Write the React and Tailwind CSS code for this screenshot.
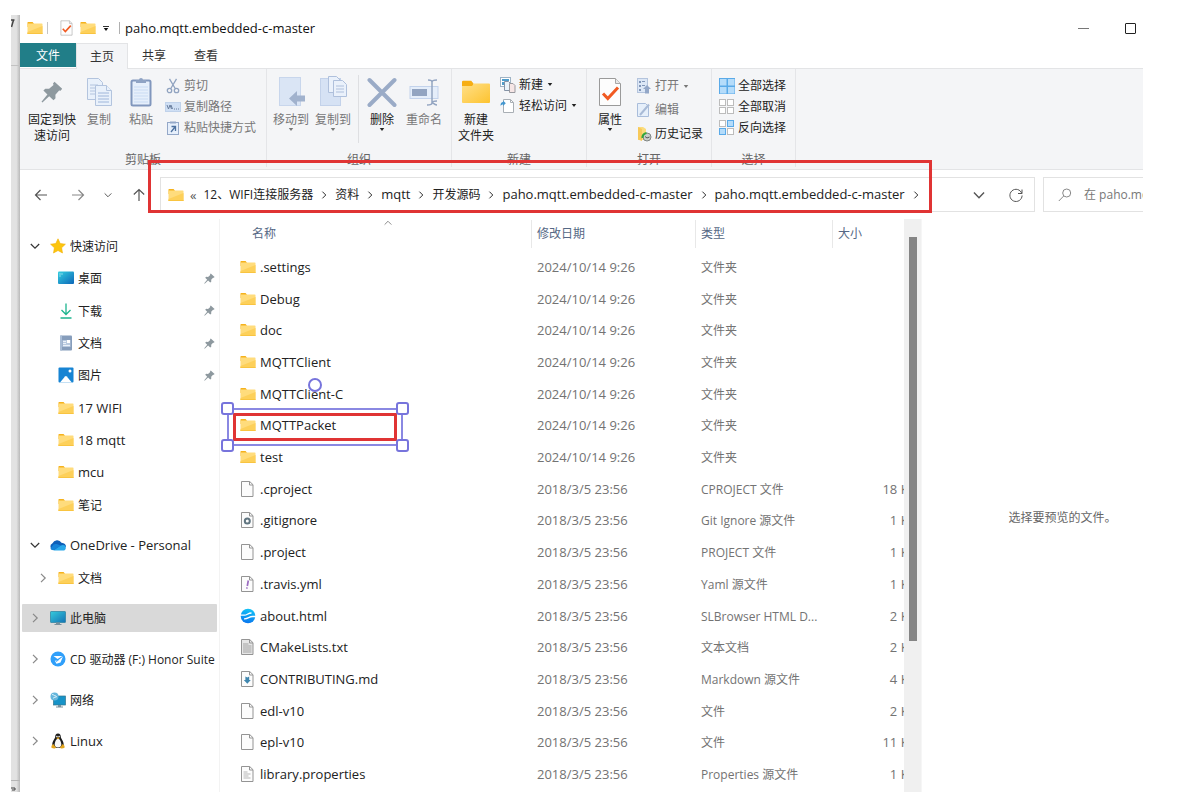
import React from "react";

/* ---------- icons ---------- */

function Folder({ className = "w-4 h-4" }) {
  return (
    <svg viewBox="0 0 16 16" className={className} aria-hidden="true">
      <path d="M1 2h4.600l1.200 1.600V7H.5V2.500a.5.5 0 0 1 .5-.5z" fill="#f5b21d" />
      <rect x="0.500" y="3.500" width="15" height="10.500" rx="0.600" fill="#ffdc7c" />
      <path d="M15.500 6v7.500a.5.5 0 0 1-.5.5H1a.5.5 0 0 1-.5-.5V12z" fill="#fdd05a" />
      <path d="M.5 13h15v.5a.5.5 0 0 1-.5.5H1a.5.5 0 0 1-.5-.5z" fill="#f9c440" />
    </svg>
  );
}

function BigFolder() {
  return (
    <svg viewBox="0 0 30 30" className="w-[30px] h-[30px]" aria-hidden="true">
      <defs>
        <linearGradient id="folderFill" x1="0" y1="0" x2="1" y2="1">
          <stop offset="0" stopColor="#ffe08a" />
          <stop offset="1" stopColor="#fdc32f" />
        </linearGradient>
      </defs>
      <path d="M1 5a1.200 1.200 0 0 1 1.200-1.200h8l2.300 2.700V10H1z" fill="#f6ae14" />
      <path d="M1 9h10l2-2.500h15a1 1 0 0 1 1 1V25a1 1 0 0 1-1 1H2a1 1 0 0 1-1-1z" fill="url(#folderFill)" />
    </svg>
  );
}

function Pin({ className }) {
  return (
    <svg viewBox="0 0 22 22" className={className} aria-hidden="true">
      <path
        d="M13.500.8l7.700 7-1.600 1.900-1.500-.3-3.700 4.300.1 3.600-2 1.900-4.300-4L1.400 21.500.5 20.700l5.900-7.200-4-3.900 1.900-1.900 3.800.1 4.400-3.700-.5-1.600z"
        fill="#8e999f"
      />
    </svg>
  );
}

function CopyPages() {
  return (
    <svg viewBox="0 0 28 32" className="w-7 h-8" fill="#e9f1fb" stroke="#b3c4de" aria-hidden="true">
      <path d="M2.500 2.500h11l4 4v17h-15z" />
      <path d="M5 9h8M5 12h8M5 15h8M5 18h8" />
      <path d="M10.500 9.500h11l5 5v15h-16z" />
      <path d="M21.500 9.500v5h5" />
      <path d="M13 17h11M13 20h11M13 23h11M13 26h11" stroke="#9fb6da" />
    </svg>
  );
}

function PasteBoard() {
  return (
    <svg viewBox="0 0 24 32" className="w-6 h-8" aria-hidden="true">
      <rect x="2.500" y="4.500" width="19" height="25" rx="1.500" fill="#e6effb" stroke="#8197bd" strokeWidth="2" />
      <path d="M7 7V4h3a2 2 0 0 1 4 0h3v3z" fill="#8fa3c4" />
      <path d="M5 11h14M5 14h14M5 17h14M5 20h14M5 23h14M5 26h14" stroke="#c9dbf3" />
    </svg>
  );
}

function Scissors() {
  return (
    <svg viewBox="0 0 14 16" className="w-[14px] h-4" fill="none" stroke="#90a3c0" strokeWidth="1.300" aria-hidden="true">
      <path d="M3.500.8l5.700 9.700M10.500.8L4.800 10.500" />
      <circle cx="3.500" cy="12.500" r="2.200" />
      <circle cx="10.500" cy="12.500" r="2.200" />
    </svg>
  );
}

function PathIcon() {
  return (
    <svg viewBox="0 0 16 12" className="w-4 h-3" aria-hidden="true">
      <rect x="0.500" y="1.500" width="15" height="9" fill="#cfdff4" stroke="#c0d2ea" />
      <path d="M2 4l1.500 4L5 4l1.500 4M6 4l1.500 4" fill="none" stroke="#6a7f9f" />
      <path d="M9 8h1M11 8h1M13 8h1" stroke="#6a7f9f" />
    </svg>
  );
}

function ShortcutIcon() {
  return (
    <svg viewBox="0 0 14 16" className="w-[14px] h-4" fill="none" aria-hidden="true">
      <rect x="1.500" y="2.500" width="11" height="12" fill="#e6effb" stroke="#94a8c8" />
      <path d="M4 1.500h6v2H4z" fill="#94a8c8" />
      <path d="M5 12l4-5M5.500 6.500H9.500V11" stroke="#4d719f" strokeWidth="1.300" />
    </svg>
  );
}

function MoveTo() {
  return (
    <svg viewBox="0 0 30 32" className="w-[30px] h-8" aria-hidden="true">
      <rect x="3.500" y="1.500" width="21" height="28" fill="#dae5f5" stroke="#c8d6ec" />
      <path d="M13 22.500l8-7.500v4.500h8v6h-8V30z" fill="#a1b2cd" />
    </svg>
  );
}

function CopyTo() {
  return (
    <svg viewBox="0 0 30 32" className="w-[30px] h-8" fill="#eaf1fb" stroke="#afc0dc" aria-hidden="true">
      <rect x="2.500" y="2.500" width="20" height="27" fill="#d6e2f4" stroke="#c3d2ea" />
      <path d="M10.500.5h8l4 4v12h-12z" />
      <path d="M15.500 4.500h9l4 4v12h-13z" />
      <path d="M18 10h8M18 13h8M18 16h8" />
    </svg>
  );
}

function DeleteX() {
  return (
    <svg viewBox="0 0 30 32" className="w-[30px] h-8" aria-hidden="true">
      <path d="M2.500 4L27.500 29M27.500 4L2.500 29" stroke="#9aabc7" strokeWidth="4" strokeLinecap="round" />
    </svg>
  );
}

function Rename() {
  return (
    <svg viewBox="0 0 30 32" className="w-[30px] h-8" fill="none" aria-hidden="true">
      <rect x="1" y="10.500" width="28" height="12" fill="#e5eefa" stroke="#c3d3ec" />
      <rect x="3" y="13" width="15" height="7" fill="#92a4c1" />
      <path d="M19 4c2 0 4 .5 4 2v21c0-1.500 2-2 5-2M28 4c-3 0-5 .5-5 2M18 29c3 0 5-.5 5-2s2 2 5 2" stroke="#92a4c1" strokeWidth="1.500" />
    </svg>
  );
}

function NewItem() {
  return (
    <svg viewBox="0 0 16 16" className="w-4 h-4" fill="#fff" stroke="#8493a6" aria-hidden="true">
      <rect x="0.500" y="0.500" width="10" height="9" stroke="#9fb3c4" />
      <path d="M2 2h7v2H2zM2 5h2v3H2z" fill="#4f9dcb" stroke="none" />
      <path d="M4.500 4.500h4l2 2v7h-6z" fill="#eaf3fa" />
      <path d="M9.500 6.500h3.500l2 2v7H9.500z" fill="#f6e6e6" stroke="#9a9aa0" />
    </svg>
  );
}

function EasyAccess() {
  return (
    <svg viewBox="0 0 16 16" className="w-4 h-4" aria-hidden="true">
      <path d="M3.500 1.500h7l3 3v10h-10z" fill="#fff" stroke="#a9afb5" />
      <path d="M10.500 1.500v3h3" fill="none" stroke="#a9afb5" />
      <path d="M.5 8C.5 5 1.500 4 3 4V2.500l2.800 2.700L3 8V6.500C2 6.500 1.200 7 .5 8z" fill="#4597cf" />
    </svg>
  );
}

function CheckedDoc({ className }) {
  return (
    <svg viewBox="0 0 24 30" className={className} aria-hidden="true">
      <path d="M1.500 1.500h16l5 5v22h-21z" fill="#fdfdfd" stroke="#9a9a9a" />
      <path d="M17.500 1.500v5h5" fill="#e9e9e9" stroke="#a8a8a8" />
      <path d="M5 16.500l4.800 5L20 10.500" fill="none" stroke="#f15a22" strokeWidth="3" />
    </svg>
  );
}

function OpenIcon() {
  return (
    <svg viewBox="0 0 16 16" className="w-4 h-4" aria-hidden="true">
      <rect x="1.500" y="0.500" width="10" height="14" fill="#dce7f6" stroke="#b4c4dd" />
      <path d="M3 3h2v2H3zM3 7h2v2H3zM3 11h2v2H3zM6 3h3v1H6zM6 7h3v1H6z" fill="#8196b8" />
      <path d="M11 7l4 4h-2v4.500H9V11H7z" fill="#93a7c8" />
    </svg>
  );
}

function EditIcon() {
  return (
    <svg viewBox="0 0 16 16" className="w-4 h-4" aria-hidden="true">
      <path d="M1.500 1.500h8l3 3v10h-11z" fill="#e6effa" stroke="#a9bddb" />
      <path d="M4 13L13 2.500" stroke="#a8bad6" strokeWidth="2" />
    </svg>
  );
}

function HistoryIcon() {
  return (
    <svg viewBox="0 0 16 16" className="w-4 h-4" aria-hidden="true">
      <path d="M2 1h5l3 2v11H2z" fill="#fbdc7c" />
      <path d="M2 1l4 2v12l-4-1.500z" fill="#f7c95a" />
      <circle cx="11" cy="11" r="4" fill="#c9cecb" stroke="#7f8583" />
      <path d="M6.500 12a4.500 4.500 0 0 1 4-5" fill="none" stroke="#32a53c" strokeWidth="2.200" />
      <path d="M9 10.500l2 1.500 2.500-1" fill="none" stroke="#555" />
    </svg>
  );
}

const selectFill = {
  all: ["#b5dcfa", "#b5dcfa", "#b5dcfa", "#b5dcfa"],
  none: ["#fff", "#fff", "#fff", "#fff"],
  invert: ["#fff", "#b5dcfa", "#b5dcfa", "#fff"],
};

function SelectGrid({ kind }) {
  const spots = [[0.5, 0.5], [8.5, 0.5], [0.5, 8.5], [8.5, 8.5]];
  return (
    <svg viewBox="0 0 16 16" className="w-4 h-4" aria-hidden="true">
      {spots.map(([x, y], i) => {
        const fill = selectFill[kind][i];
        const size = kind === "all" ? 7.5 : 6;
        return (
          <rect
            key={i}
            x={x}
            y={y}
            width={size}
            height={size}
            fill={fill}
            stroke={fill === "#fff" ? "#bcbcbc" : "#5aaae8"}
          />
        );
      })}
    </svg>
  );
}

function Caret({ className = "" }) {
  return (
    <svg viewBox="0 0 6 4" className={"w-[6px] h-[3px] " + className} aria-hidden="true">
      <path d="M0 0h6L3 4z" fill="currentColor" />
    </svg>
  );
}

function Chevron({ dir = "right", className = "w-[10px] h-[10px]" }) {
  const paths = {
    right: "M3 .8L7.200 5 3 9.200",
    down: "M.8 3L5 7.200 9.200 3",
    up: "M.8 7L5 2.800 9.200 7",
  };
  return (
    <svg viewBox="0 0 10 10" className={"shrink-0 " + className} fill="none" stroke="currentColor" strokeWidth="1.200" aria-hidden="true">
      <path d={paths[dir]} />
    </svg>
  );
}

function Arrow({ dir }) {
  const paths = {
    left: "M13 7H1.500M6.500 2l-5 5 5 5",
    right: "M1 7h11.500M7.500 2l5 5-5 5",
    up: "M7 13V1.500M1.800 6.500L7 1.500l5.200 5",
  };
  return (
    <svg viewBox="0 0 14 14" className="w-[14px] h-[14px]" fill="none" stroke="currentColor" strokeWidth="1.200" aria-hidden="true">
      <path d={paths[dir]} />
    </svg>
  );
}

function Star() {
  return (
    <svg viewBox="0 0 16 16" className="w-4 h-4" aria-hidden="true">
      <path d="M8 .8l2.200 4.700 5.200.7-3.800 3.600.9 5.200L8 12.500 3.500 15l.9-5.200L.6 6.200l5.200-.7z" fill="#fcc50e" stroke="#f4b000" strokeWidth="0.600" />
    </svg>
  );
}

function Desktop() {
  return (
    <svg viewBox="0 0 16 16" className="w-4 h-4" aria-hidden="true">
      <defs>
        <linearGradient id="deskFill" x1="0" y1="0" x2="1" y2="1">
          <stop offset="0" stopColor="#35cfe0" />
          <stop offset="1" stopColor="#0c66b8" />
        </linearGradient>
      </defs>
      <rect y="1.500" width="16" height="12.500" rx="1" fill="url(#deskFill)" />
      <path d="M1.500 4h1M1.500 6h1M3.500 4h1" stroke="#e4fbff" />
    </svg>
  );
}

function Download() {
  return (
    <svg viewBox="0 0 16 16" className="w-4 h-4" fill="none" stroke="#1db48e" strokeWidth="1.300" aria-hidden="true">
      <path d="M8 .5v10.800M3.500 7L8 11.500 12.500 7M2.500 15h11" />
    </svg>
  );
}

function DocsIcon() {
  return (
    <svg viewBox="0 0 16 16" className="w-4 h-4" aria-hidden="true">
      <rect x="2" y="0.500" width="12" height="15" rx="1" fill="#869dbb" />
      <rect x="2" y="0.500" width="2" height="15" fill="#a9bdd6" />
      <rect x="4.500" y="5" width="8" height="7" fill="#b9cadf" />
      <path d="M5 6.500h3M5 8.500h3M5 10.500h7" stroke="#eaf1f9" />
      <rect x="9" y="5" width="3" height="3" fill="#fff" />
    </svg>
  );
}

function Pictures() {
  return (
    <svg viewBox="0 0 16 16" className="w-4 h-4" aria-hidden="true">
      <rect x="0.500" y="0.500" width="15" height="15" rx="1" fill="#1784d3" />
      <path d="M2 15.500l5-6a1.200 1.200 0 0 1 1.800 0l5 6z" fill="#fff" />
      <circle cx="12" cy="4" r="1.500" fill="#fff" />
    </svg>
  );
}

function OneDrive() {
  return (
    <svg viewBox="0 0 16 16" className="w-4 h-4" aria-hidden="true">
      <path d="M3.500 13A3.500 3.500 0 0 1 2.500 6.300 5 5 0 0 1 11.500 5.700c3 .3 4.500 2 4.500 4L8 13z" fill="#0e5fb8" />
      <path d="M.5 11.500l3-4c1.500-1 4-.5 5.500.5l2 .6-7.700 4.600C1.800 13.200.8 12.500.5 11.500z" fill="#1583d8" />
      <path d="M3.300 13.500L11 8.500a3 3 0 0 1 2-.6 2.800 2.800 0 0 1 0 5.600z" fill="#28a8ea" />
    </svg>
  );
}

function Computer() {
  return (
    <svg viewBox="0 0 16 16" className="w-4 h-4" aria-hidden="true">
      <defs>
        <linearGradient id="pcFill" x1="0" y1="0" x2="1" y2="1">
          <stop offset="0" stopColor="#35cbdc" />
          <stop offset="1" stopColor="#1372b5" />
        </linearGradient>
      </defs>
      <rect x="0.500" y="1.500" width="15" height="11" rx="0.600" fill="url(#pcFill)" stroke="#27809f" strokeWidth="0.700" />
      <path d="M6 12.500h4v1.500h1.500v1h-7v-1H6z" fill="#78909c" />
    </svg>
  );
}

function Disc() {
  return (
    <svg viewBox="0 0 16 16" className="w-4 h-4" aria-hidden="true">
      <circle cx="8" cy="8" r="7.500" fill="#2f9ffa" />
      <path d="M3.500 5h9L7.500 8z" fill="#fff" />
      <path d="M13 5.500l-2.500 6-4 1.200-1.800-3L8 9.500z" fill="#fff" />
      <path d="M5.500 11l3-2" stroke="#2f9ffa" strokeWidth="0.800" />
    </svg>
  );
}

function Network() {
  return (
    <svg viewBox="0 0 16 16" className="w-4 h-4" aria-hidden="true">
      <rect x="3.500" y="4" width="12" height="9" fill="#1793c8" stroke="#35758c" strokeWidth="0.700" />
      <path d="M8 13h3v1.500h2v1H6v-1h2z" fill="#78909c" />
      <circle cx="4.500" cy="4.500" r="4" fill="#66b6dc" />
      <path d="M2 2.500c2 0 2 1.500 4 1.500M3 6.500c1-1.500 2.500-1 4-2" stroke="#dff4fb" fill="none" />
    </svg>
  );
}

function Tux() {
  return (
    <svg viewBox="0 0 16 16" className="w-4 h-4" aria-hidden="true">
      <path d="M8 .5c2 0 2.800 1.400 2.800 3.300 0 2 2.900 4 2.900 8 0 2-2 3.200-5.700 3.200s-5.700-1.200-5.700-3.200c0-4 2.900-6 2.900-8C5.200 1.900 6 .5 8 .5z" fill="#1c1c1c" />
      <path d="M8 5.800c1.600 0 3.300 3 3.300 5.600 0 2-1.300 3-3.300 3s-3.300-1-3.300-3C4.700 8.800 6.400 5.800 8 5.800z" fill="#f7f7f7" />
      <circle cx="6.900" cy="3.600" r="0.800" fill="#fff" />
      <circle cx="9.100" cy="3.600" r="0.800" fill="#fff" />
      <path d="M6.300 5l1.700-.8 1.700.8L8 6.200z" fill="#f2b01e" />
      <path d="M3.300 11l2.700 3.500c-.6 1.400-3 1.200-4.500.2-.6-1.300.6-3 1.800-3.700zM12.700 11L10 14.500c.6 1.400 3 1.200 4.500.2.600-1.300-.6-3-1.800-3.700z" fill="#e3a51d" />
    </svg>
  );
}

function Browser() {
  return (
    <svg viewBox="0 0 16 16" className="w-4 h-4" fill="none" aria-hidden="true">
      <defs>
        <linearGradient id="browserFill" x1="0.600" y1="0" x2="0.400" y2="1">
          <stop offset="0" stopColor="#12c4f6" />
          <stop offset="1" stopColor="#0a76ee" />
        </linearGradient>
      </defs>
      <circle cx="8" cy="8" r="7.300" fill="url(#browserFill)" />
      <path d="M0 7.200h4.500c2.500 0 3.500-2.200 7-2.200" stroke="#fff" strokeWidth="1.300" />
      <path d="M16 8.500h-3.500c-3.500 0-4.500 2.600-8.500 2.300" stroke="#fff" strokeWidth="1.300" />
    </svg>
  );
}

function FileIcon({ kind }) {
  if (kind === "folder") return <Folder />;
  if (kind === "browser") return <Browser />;
  return (
    <svg viewBox="0 0 16 16" className="w-4 h-4" fill="none" aria-hidden="true">
      <path d="M1.500.5h8.200L13 3.700v11.800H1.500z" fill={kind === "text" ? "#e6e6e6" : "#fcfcfc"} stroke="#949494" />
      <path d="M9.500.5v3.500H13" stroke="#949494" />
      {kind === "gear" && <circle cx="7.300" cy="9" r="2.500" stroke="#607580" strokeWidth="2" />}
      {kind === "yaml" && <path d="M8.300 4.500l-1 5.500M7 11.300l-.2 1.400" stroke="#9b6cc0" strokeWidth="1.700" />}
      {kind === "text" && <path d="M3 5h5.500M3 7h8.500M3 9h8.500M3 11h8.500M3 13h8.500" stroke="#a3a3a3" />}
      {kind === "markdown" && <path d="M5.400 5.500l1.900 1 1.900-1v3.500h1.600L7.300 12.800 3.800 9h1.600z" fill="#3f86ae" />}
      {kind === "lines" && <path d="M3.500 6h4M3.500 8h7M3.500 10h5M3.500 12h7" stroke="#b5b5b5" />}
    </svg>
  );
}

/* ---------- data ---------- */

const quickAccess = [
  { name: "桌面", icon: <Desktop />, pinned: true },
  { name: "下载", icon: <Download />, pinned: true },
  { name: "文档", icon: <DocsIcon />, pinned: true },
  { name: "图片", icon: <Pictures />, pinned: true },
  { name: "17 WIFI", icon: <Folder /> },
  { name: "18 mqtt", icon: <Folder /> },
  { name: "mcu", icon: <Folder /> },
  { name: "笔记", icon: <Folder /> },
];

const drives = [
  { name: "此电脑", icon: <Computer />, active: true },
  { name: "CD 驱动器 (F:) Honor Suite", icon: <Disc /> },
  { name: "网络", icon: <Network /> },
  { name: "Linux", icon: <Tux /> },
];

const crumbs = [
  "12、WIFI连接服务器",
  "资料",
  "mqtt",
  "开发源码",
  "paho.mqtt.embedded-c-master",
  "paho.mqtt.embedded-c-master",
];

const NEW = "2024/10/14 9:26";
const OLD = "2018/3/5 23:56";

const files = [
  { name: ".settings", date: NEW, type: "文件夹", icon: "folder" },
  { name: "Debug", date: NEW, type: "文件夹", icon: "folder" },
  { name: "doc", date: NEW, type: "文件夹", icon: "folder" },
  { name: "MQTTClient", date: NEW, type: "文件夹", icon: "folder" },
  { name: "MQTTClient-C", date: NEW, type: "文件夹", icon: "folder" },
  { name: "MQTTPacket", date: NEW, type: "文件夹", icon: "folder", marked: true },
  { name: "test", date: NEW, type: "文件夹", icon: "folder" },
  { name: ".cproject", date: OLD, type: "CPROJECT 文件", size: "18 KB", icon: "blank" },
  { name: ".gitignore", date: OLD, type: "Git Ignore 源文件", size: "1 KB", icon: "gear" },
  { name: ".project", date: OLD, type: "PROJECT 文件", size: "1 KB", icon: "blank" },
  { name: ".travis.yml", date: OLD, type: "Yaml 源文件", size: "1 KB", icon: "yaml" },
  { name: "about.html", date: OLD, type: "SLBrowser HTML D...", size: "2 KB", icon: "browser" },
  { name: "CMakeLists.txt", date: OLD, type: "文本文档", size: "2 KB", icon: "text" },
  { name: "CONTRIBUTING.md", date: OLD, type: "Markdown 源文件", size: "4 KB", icon: "markdown" },
  { name: "edl-v10", date: OLD, type: "文件", size: "2 KB", icon: "blank" },
  { name: "epl-v10", date: OLD, type: "文件", size: "11 KB", icon: "blank" },
  { name: "library.properties", date: OLD, type: "Properties 源文件", size: "1 KB", icon: "lines" },
];

const hasHan = (text) => /[\u4e00-\u9fff]/.test(text);

/* ---------- title bar and ribbon ---------- */

function TitleBar() {
  return (
    <header className="flex items-center h-7 pb-[2px] pl-[7px] pr-[7px]">
      <Folder />
      <span className="w-px h-3 ml-1 bg-[#c4c4c4]" />
      <button aria-label="属性" className="ml-3">
        <CheckedDoc className="w-[13px] h-4" />
      </button>
      <button aria-label="新建文件夹" className="ml-[7px]">
        <Folder />
      </button>
      <button aria-label="自定义快速访问工具栏" className="flex flex-col items-center gap-px ml-[6px] w-[7px]">
        <span className="w-[6px] h-px bg-[#333]" />
        <Caret />
      </button>
      <span className="w-px h-3 ml-[10px] bg-[#b0b0b0]" />
      <h1 className="ml-[5px] text-[13px] leading-4 whitespace-nowrap">paho.mqtt.embedded-c-master</h1>
      <div className="flex items-center ml-auto gap-9">
        <button aria-label="最小化" className="flex items-center w-[11px] h-4">
          <span className="w-full h-px bg-[#777]" />
        </button>
        <button aria-label="最大化" className="w-[11px] h-[11px] border border-[#222] rounded-[1px]" />
      </div>
    </header>
  );
}

function Tabs() {
  return (
    <nav className="flex h-[25px] text-xs text-[#333]">
      <button className="w-14 h-6 pt-[2px] bg-[#217e88] text-white">文件</button>
      <button className="relative z-10 w-[52px] h-[26px] bg-[#f4f5f7] border border-b-0 border-[#e3e4e6]">主页</button>
      <button className="w-[52px]">共享</button>
      <button className="w-[52px]">查看</button>
    </nav>
  );
}

function RibbonGroup({ label, className, pad = "pl-[3px]", children }) {
  return (
    <section className={"shrink-0 border-r border-[#e4e5e8] " + className}>
      <div className={"flex h-[83px] " + pad}>{children}</div>
      <p className="leading-4 text-center text-[#666]">{label}</p>
    </section>
  );
}

function BigButton({ icon, children, caret, muted, className }) {
  return (
    <button
      className={
        "flex flex-col items-center shrink-0 pt-[7px] whitespace-nowrap " +
        (muted ? "text-[#777] " : "text-[#222] ") +
        className
      }
    >
      <span className="flex items-center justify-center h-8 mb-1">{icon}</span>
      <span className="leading-4">{children}</span>
      {caret && <Caret />}
    </button>
  );
}

function SmallButton({ icon, children, caret, muted, className = "h-[21px]" }) {
  return (
    <button className={"flex items-center gap-[3px] whitespace-nowrap " + (muted ? "text-[#777] " : "text-[#222] ") + className}>
      <span className="flex justify-center w-4">{icon}</span>
      {children}
      {caret && <Caret className="ml-px" />}
    </button>
  );
}

function Ribbon() {
  return (
    <div className="flex h-[102px] pb-[2px] text-xs bg-[#f4f5f7] border-y border-[#e3e4e6]">
      <RibbonGroup label="剪贴板" className="w-[247px]" pad="pl-[7px]">
        <BigButton icon={<Pin className="w-[22px] h-[22px]" />} className="w-[50px]">
          固定到快
          <br />
          速访问
        </BigButton>
        <BigButton icon={<CopyPages />} muted className="w-11">复制</BigButton>
        <BigButton icon={<PasteBoard />} muted className="w-10">粘贴</BigButton>
        <div className="pt-[6px] ml-1">
          <SmallButton icon={<Scissors />} muted>剪切</SmallButton>
          <SmallButton icon={<PathIcon />} muted>复制路径</SmallButton>
          <SmallButton icon={<ShortcutIcon />} muted>粘贴快捷方式</SmallButton>
        </div>
      </RibbonGroup>
      <RibbonGroup label="组织" className="w-[185px]">
        <BigButton icon={<MoveTo />} muted caret className="w-[42px]">移动到</BigButton>
        <BigButton icon={<CopyTo />} muted caret className="w-[42px]">复制到</BigButton>
        <span className="w-px h-[68px] mt-[6px] ml-1 mr-[2px] bg-[#dedfe2]" />
        <BigButton icon={<DeleteX />} caret className="w-[42px]">删除</BigButton>
        <BigButton icon={<Rename />} muted className="w-[42px]">重命名</BigButton>
      </RibbonGroup>
      <RibbonGroup label="新建" className="w-[135px]" pad="pl-1">
        <BigButton icon={<BigFolder />} className="w-10">
          新建
          <br />
          文件夹
        </BigButton>
        <div className="pt-[5px] ml-1">
          <SmallButton icon={<NewItem />} caret>新建</SmallButton>
          <SmallButton icon={<EasyAccess />} caret>轻松访问</SmallButton>
        </div>
      </RibbonGroup>
      <RibbonGroup label="打开" className="w-[125px]">
        <BigButton icon={<CheckedDoc className="w-6 h-[30px]" />} caret className="w-10">属性</BigButton>
        <div className="pt-[5px] ml-[6px]">
          <SmallButton icon={<OpenIcon />} muted caret className="h-6">打开</SmallButton>
          <SmallButton icon={<EditIcon />} muted className="h-6">编辑</SmallButton>
          <SmallButton icon={<HistoryIcon />} className="h-6">历史记录</SmallButton>
        </div>
      </RibbonGroup>
      <RibbonGroup label="选择" className="w-[84px]" pad="pl-[7px]">
        <div className="pt-[6px]">
          <SmallButton icon={<SelectGrid kind="all" />}>全部选择</SmallButton>
          <SmallButton icon={<SelectGrid kind="none" />}>全部取消</SmallButton>
          <SmallButton icon={<SelectGrid kind="invert" />}>反向选择</SmallButton>
        </div>
      </RibbonGroup>
    </div>
  );
}

/* ---------- address bar ---------- */

function AddressBar() {
  return (
    <div className="relative flex h-[49px] pt-[7px] text-[#555]">
      <div className="flex items-center shrink-0 w-[140px] h-[35px] pl-[14px]">
        <button aria-label="后退"><Arrow dir="left" /></button>
        <button aria-label="前进" className="ml-[23px] text-[#888]"><Arrow dir="right" /></button>
        <button aria-label="最近浏览的位置" className="ml-[19px]"><Chevron dir="down" className="w-2 h-2" /></button>
        <button aria-label="上移" className="ml-[20px]"><Arrow dir="up" /></button>
      </div>
      <div className="flex items-center flex-1 min-w-0 h-[35px] pl-[7px] pr-[11px] border border-[#e2e2e2]">
        <Folder className="w-4 h-4 shrink-0" />
        <span className="ml-[6px] mr-[7px] text-[13px] leading-4">«</span>
        <ol className="flex items-center text-[#222] whitespace-nowrap">
          {crumbs.map((crumb, i) => (
            <li key={i} className="flex items-center">
              <a href="#" className={hasHan(crumb) ? "text-xs" : "text-[13px]"}>{crumb}</a>
              <Chevron className="w-2 h-2 mx-[7px]" />
            </li>
          ))}
        </ol>
        <button aria-label="以前的位置" className="ml-auto"><Chevron dir="down" className="w-3 h-3" /></button>
        <button aria-label="刷新" className="ml-6">
          <svg viewBox="0 0 14 14" className="w-[14px] h-[14px]" fill="none" stroke="currentColor" aria-hidden="true">
            <path d="M12.800 5.500A6.100 6.100 0 1 0 13.100 7.500M13 1.500v4H9" />
          </svg>
        </button>
      </div>
      <label className="flex items-center shrink-0 w-[100px] h-[35px] ml-2 pl-[14px] border border-r-0 border-[#e2e2e2]">
        <svg viewBox="0 0 14 14" className="w-[14px] h-[14px] shrink-0" fill="none" stroke="#888" aria-hidden="true">
          <circle cx="8.700" cy="5" r="4" />
          <path d="M5.700 8L.8 13" />
        </svg>
        <input
          type="text"
          aria-label="搜索"
          placeholder="在 paho.mqtt.embedded-c-master 中搜索"
          className="w-full min-w-0 ml-3 text-xs placeholder:text-[#777] bg-transparent outline-none"
        />
      </label>
      <div className="absolute left-[128px] right-[211px] -top-[10px] bottom-[6px] border-[3px] border-[#e03434] pointer-events-none" />
    </div>
  );
}

/* ---------- navigation pane ---------- */

function TreeRow({ name, icon, chevron, child, pinned, active }) {
  return (
    <a
      href="#"
      className={
        "flex items-center min-h-7 rounded-[1px] text-[#222] " +
        (child ? "pl-[14px] " : "pl-[6px] ") +
        (active ? "bg-[#d9d9d9]" : "")
      }
    >
      <span className={"flex justify-center w-[14px] mr-2 shrink-0 " + (chevron === "down" ? "text-[#333]" : "text-[#888]")}>
        {chevron && <Chevron dir={chevron} />}
      </span>
      <span className="shrink-0">{icon}</span>
      <span className={"ml-1 leading-4 whitespace-nowrap overflow-hidden " + (hasHan(name) ? "pt-[2px] text-xs" : "text-[13px]")}>
        {name}
      </span>
      {pinned && <Pin className="w-[11px] h-[11px] ml-auto mr-[2px]" />}
    </a>
  );
}

function Sidebar() {
  return (
    <aside className="shrink-0 w-[199px] pt-[11px] px-[2px]">
      <div className="grid auto-rows-fr h-[291px]">
        <TreeRow name="快速访问" icon={<Star />} chevron="down" />
        {quickAccess.map((item) => (
          <TreeRow key={item.name} child {...item} />
        ))}
      </div>
      <div className="grid auto-rows-fr h-[65px] mt-2">
        <TreeRow name="OneDrive - Personal" icon={<OneDrive />} chevron="down" />
        <TreeRow name="文档" icon={<Folder />} chevron="right" child />
      </div>
      <div className="flex flex-col gap-[13px] mt-[10px]">
        {drives.map((item) => (
          <TreeRow key={item.name} chevron="right" {...item} />
        ))}
      </div>
    </aside>
  );
}

/* ---------- file list ---------- */

function Marker() {
  const handle = "absolute w-[13px] h-[13px] bg-white border-2 border-[#7774dc] rounded-[3px] ";
  return (
    <div className="absolute left-[7px] -top-[2px] w-[176px] h-[38px] border-2 border-[#8a88e2] pointer-events-none">
      <div className="absolute left-1 right-1 top-[3px] bottom-[3px] border-[3px] border-[#e03434]" />
      <span className="absolute left-[79px] -top-[32px] w-[14px] h-[14px] border-2 border-[#7774dc] rounded-full" />
      <span className={handle + "-left-[8px] -top-[8px]"} />
      <span className={handle + "-right-[8px] -top-[8px]"} />
      <span className={handle + "-left-[8px] -bottom-[8px]"} />
      <span className={handle + "-right-[8px] -bottom-[8px]"} />
    </div>
  );
}

function FileList() {
  return (
    <div className="relative flex-1 min-w-0 pb-[2px] overflow-hidden border-l border-[#f3f3f3]">
      <Chevron dir="up" className="absolute left-[164px] top-0 w-2 h-2 text-[#888]" />
      <table className="w-[calc(100%+16px)] h-[571px] table-fixed border-collapse whitespace-nowrap text-[#737373]">
        <colgroup>
          <col />
          <col className="w-[164px]" />
          <col className="w-[137px]" />
          <col className="w-[88px]" />
        </colgroup>
        <thead>
          <tr className="h-8 text-xs text-left text-[#566885]">
            <th className="p-0 pl-8 pb-[2px] font-normal">名称</th>
            {["修改日期", "类型", "大小"].map((title) => (
              <th key={title} className="p-0 pb-[2px] font-normal">
                <span className="flex items-center h-7 pl-[5px] border-l border-[#e8e8e8]">{title}</span>
              </th>
            ))}
          </tr>
        </thead>
        <tbody>
          {files.map((file) => (
            <tr key={file.name}>
              <td className="relative p-0 pl-5 text-[13px] leading-4 text-[#222]">
                <span className="flex items-center gap-1">
                  <FileIcon kind={file.icon} />
                  {file.name}
                </span>
                {file.marked && <Marker />}
              </td>
              <td className="p-0 pl-[6px] text-[13px] leading-4">{file.date}</td>
              <td className="p-0 pt-[2px] pl-[6px] text-xs">{file.type}</td>
              <td className="p-0 pr-[3px] text-[13px] leading-4 text-right">{file.size}</td>
            </tr>
          ))}
        </tbody>
      </table>
    </div>
  );
}

export default function App() {
  return (
    <div className="flex pt-[15px] pb-2 pl-[11px] pr-[61px] bg-white text-[#111] overflow-hidden font-['Open_Sans','Noto_Sans_CJK_SC',sans-serif]">
      {/* edge of the window behind */}
      <div className="flex flex-col justify-between shrink-0 w-[9px] bg-linear-to-r from-[#e2e2e2] from-60% to-[#b9b9b9]">
        <div className="h-[51px] border-b border-[#c2c2c2]">
          <svg viewBox="0 0 5 14" className="w-[5px] h-[14px]" aria-hidden="true">
            <path d="M0 5h3.500M2.500 5L.5 12" stroke="#444" strokeWidth="1.500" fill="none" />
          </svg>
        </div>
        <div className="h-3 pt-[6px] border-t border-[#b5b5b5]">
          <svg viewBox="0 0 5 4" className="w-[5px] h-1" aria-hidden="true">
            <path d="M0 1h4v2H1" stroke="#444" fill="none" />
          </svg>
        </div>
      </div>
      <main className="flex-1 min-w-0 overflow-hidden bg-white rounded-tl-md">
        <TitleBar />
        <Tabs />
        <Ribbon />
        <AddressBar />
        <div className="flex">
          <Sidebar />
          <FileList />
          <div className="shrink-0 w-[17px] pt-[18px] pl-[5px] bg-[#f0f0f0]">
            <div className="w-2 h-[404px] bg-[#858585]" />
          </div>
          <section className="flex items-center justify-center shrink-0 w-[222px] pt-6 pl-[60px] border-l border-[#f6f6f6]">
            <p className="text-xs text-[#666]">选择要预览的文件。</p>
          </section>
        </div>
      </main>
    </div>
  );
}
